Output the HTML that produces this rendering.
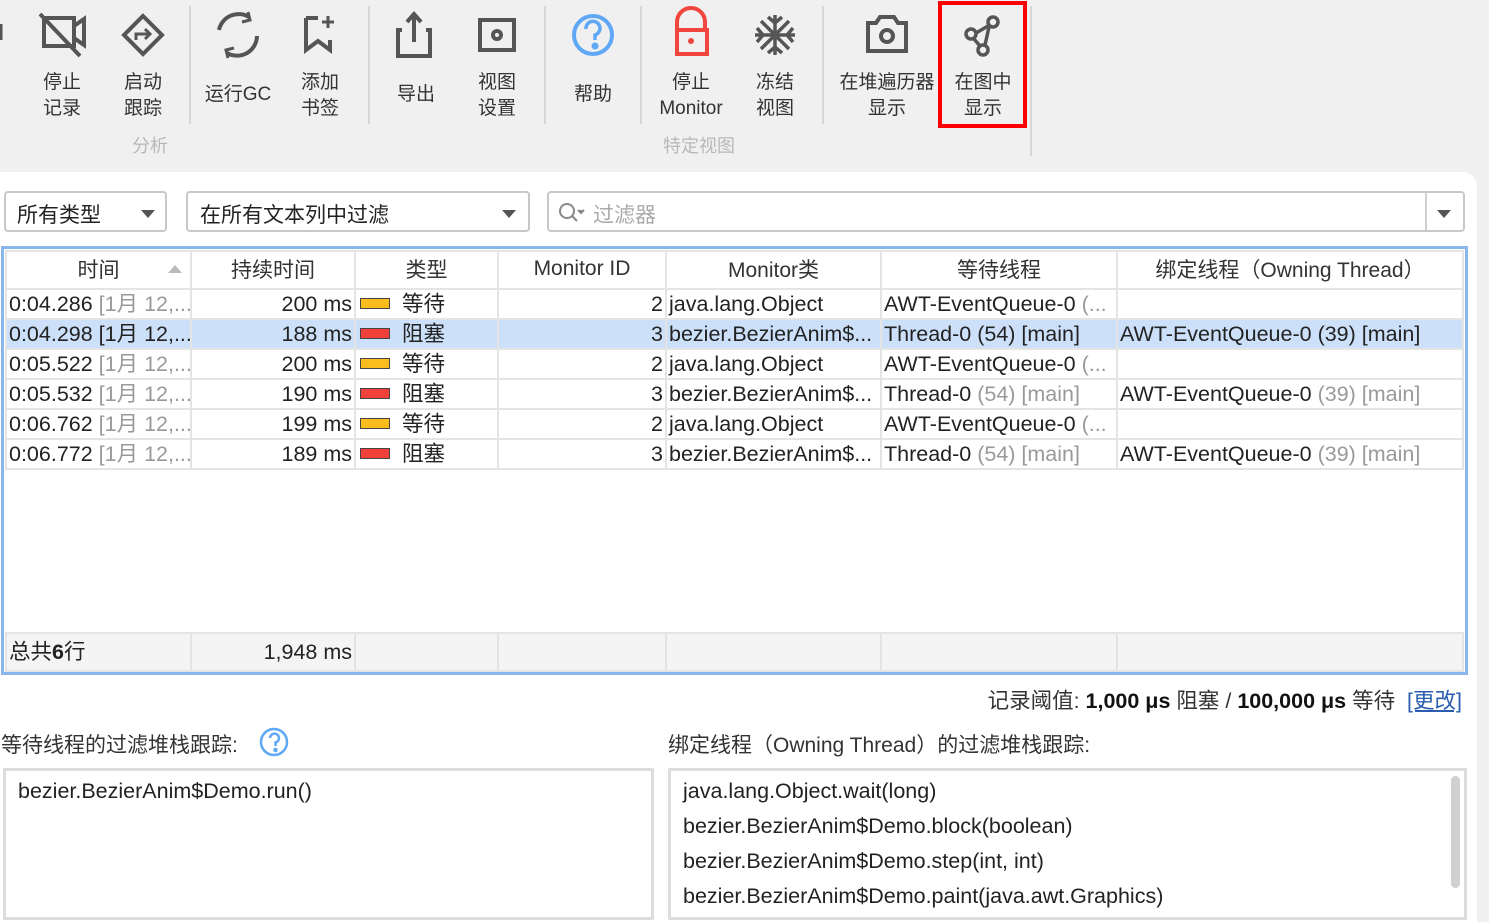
<!DOCTYPE html>
<html><head><meta charset="utf-8"><style>
*{box-sizing:border-box;margin:0;padding:0}
body{width:1489px;height:922px;overflow:hidden;background:#f0f0f0;font-family:"Liberation Sans","Noto Sans CJK SC",sans-serif;color:#222;position:relative}
.a{position:absolute}
.tb{text-align:center;font-size:19px;color:#333;line-height:26px;white-space:nowrap}
.sep{position:absolute;top:6px;width:2px;height:118px;background:#d6d6d6}
.grp{position:absolute;top:132px;font-size:18px;color:#b8b8b8}
.panel{position:absolute;left:0;top:172px;width:1477px;height:750px;background:#fff;border-top-right-radius:14px}
.box{position:absolute;border:2px solid #c8c8c8;border-radius:4px;background:#fff;font-size:21px}
table{border-collapse:collapse;table-layout:fixed;font-size:21.5px}
td{border:2px solid #e4e4e4;height:30px;padding:0 2px;white-space:nowrap;overflow:hidden;line-height:26px}
th{border:2px solid #e4e4e4;height:38px;font-weight:normal;font-size:21px;color:#333;padding-bottom:3px}
.r{text-align:right}
.g{color:#999}
.sel td{background:#cce0fa}
.sw{display:inline-block;width:30px;height:11px;border:1px solid #444;vertical-align:middle;margin:0 12px 3px 2px}
.y{background:#fbbc1e}.rd{background:#f2403a}
</style></head><body>
<svg class="a" style="left:0;top:0" width="1040" height="70" fill="none" stroke="#555" stroke-width="4">
<path d="M0 24v16" stroke-width="5"/>
<path d="M44 18h30v28h-30z M74 26l10-7v26l-10-7" /><path d="M40 14l40 42" stroke-width="4"/>
<path d="M143 16l19 19-19 19-19-19z"/><path d="M136 40v-6h12" stroke-width="3"/><path d="M145 29l5 5-5 5" stroke-width="3"/>
<path d="M219 30a20 20 0 0 1 30-13 M257 36a20 20 0 0 1-30 17" /><path d="M248 12l2 8-8 2 M228 58l-2-8 8-2" stroke-width="3"/>
<path d="M306 18v32l12-9 12 9v-10 M306 18h12" /><path d="M328 16v12 M322 22h12" stroke-width="3"/>
<path d="M402 30h-4v26h32v-26h-4 M414 16v26 M407 22l7-8 7 8"/>
<path d="M480 20h34v30h-34z"/><circle cx="497" cy="35" r="4" stroke-width="4"/>
<circle cx="593" cy="35" r="19" stroke="#5fa8f5"/>
<path d="M586 29a7 7 0 1 1 9 6v5" stroke="#5fa8f5" stroke-width="3.5"/><circle cx="595" cy="46" r="1.5" fill="#5fa8f5" stroke="#5fa8f5"/>
<path d="M677 30v-8a14 14 0 0 1 28 0v8" stroke="#f0463d"/><rect x="677" y="30" width="30" height="24" stroke="#f0463d"/><circle cx="691" cy="41" r="3" fill="#f0463d" stroke="none"/>
<path d="M775 15v40 M755 35h40 M761 21l28 28 M789 21l-28 28 M768 17l7 6 7-6 M768 53l7-6 7 6 M757 28l6 7-6 7 M793 28l-6 7 6 7" stroke-width="3.5"/>
<path d="M868 23h8l4-6h14l4 6h8v28h-38z"/><circle cx="887" cy="36" r="6"/>
<circle cx="993" cy="22" r="5" stroke-width="3.5"/><circle cx="971" cy="34" r="5" stroke-width="3.5"/><circle cx="983" cy="50" r="5" stroke-width="3.5"/><path d="M976 33l12-7 M974 39l6 7 M989 27l-4 18" stroke-width="3.5"/>
</svg>
<div class="a tb" style="left:32px;top:70px;width:60px">停止<br>记录</div>
<div class="a tb" style="left:113px;top:70px;width:60px">启动<br>跟踪</div>
<div class="a tb" style="left:198px;top:82px;width:80px">运行GC</div>
<div class="a tb" style="left:290px;top:70px;width:60px">添加<br>书签</div>
<div class="a tb" style="left:386px;top:82px;width:60px">导出</div>
<div class="a tb" style="left:467px;top:70px;width:60px">视图<br>设置</div>
<div class="a tb" style="left:563px;top:82px;width:60px">帮助</div>
<div class="a tb" style="left:651px;top:70px;width:80px">停止<br>Monitor</div>
<div class="a tb" style="left:745px;top:70px;width:60px">冻结<br>视图</div>
<div class="a tb" style="left:837px;top:70px;width:100px">在堆遍历器<br>显示</div>
<div class="a tb" style="left:943px;top:70px;width:80px">在图中<br>显示</div>
<div class="sep" style="left:189px"></div><div class="sep" style="left:368px"></div><div class="sep" style="left:544px"></div><div class="sep" style="left:640px"></div><div class="sep" style="left:822px"></div><div class="sep" style="left:1030px;height:150px"></div>
<div class="grp" style="left:132px">分析</div><div class="grp" style="left:663px">特定视图</div>
<div class="a" style="left:938px;top:1px;width:89px;height:127px;border:4px solid #f00"></div>

<div class="panel"></div>
<div class="box" style="left:4px;top:191px;width:163px;height:41px;padding:6px 11px">所有类型<span class="a" style="right:10px;top:17px;border:7px solid transparent;border-top:8px solid #555;border-bottom:0"></span></div>
<div class="box" style="left:186px;top:191px;width:344px;height:41px;padding:6px 12px">在所有文本列中过滤<span class="a" style="right:12px;top:17px;border:7px solid transparent;border-top:8px solid #555;border-bottom:0"></span></div>
<div class="box" style="left:547px;top:191px;width:918px;height:41px;padding:6px 44px;color:#aaa">过滤器
<svg class="a" style="left:9px;top:9px" width="28" height="22" fill="none" stroke="#888" stroke-width="2"><circle cx="9" cy="9" r="7"/><path d="M14 14l5 5"/><path d="M20 8l3 3 3-3" fill="#888"/></svg>
<span class="a" style="left:876px;top:0;width:2px;height:37px;background:#d0d0d0"></span>
<span class="a" style="right:12px;top:17px;border:7px solid transparent;border-top:8px solid #555;border-bottom:0"></span></div>

<div class="a" style="left:1px;top:246px;width:1467px;height:429px;border:3px solid #8ab6ee;background:#fff"></div>
<table class="a" style="left:5px;top:250px;width:1457px">
<colgroup><col style="width:185px"><col style="width:164px"><col style="width:143px"><col style="width:168px"><col style="width:215px"><col style="width:236px"><col style="width:346px"></colgroup>
<tr><th style="position:relative">时间<span class="a" style="right:8px;top:13px;border:7px solid transparent;border-bottom:8px solid #bbb;border-top:0"></span></th><th>持续时间</th><th>类型</th><th>Monitor ID</th><th>Monitor类</th><th>等待线程</th><th>绑定线程（Owning Thread）</th></tr>
<tr><td>0:04.286 <span class="g">[1月 12,...</span></td><td class="r">200 ms</td><td><span class="sw y"></span>等待</td><td class="r">2</td><td>java.lang.Object</td><td>AWT-EventQueue-0 <span class="g">(...</span></td><td></td></tr>
<tr class="sel"><td>0:04.298 [1月 12,...</td><td class="r">188 ms</td><td><span class="sw rd"></span>阻塞</td><td class="r">3</td><td>bezier.BezierAnim$...</td><td>Thread-0 (54) [main]</td><td>AWT-EventQueue-0 (39) [main]</td></tr>
<tr><td>0:05.522 <span class="g">[1月 12,...</span></td><td class="r">200 ms</td><td><span class="sw y"></span>等待</td><td class="r">2</td><td>java.lang.Object</td><td>AWT-EventQueue-0 <span class="g">(...</span></td><td></td></tr>
<tr><td>0:05.532 <span class="g">[1月 12,...</span></td><td class="r">190 ms</td><td><span class="sw rd"></span>阻塞</td><td class="r">3</td><td>bezier.BezierAnim$...</td><td>Thread-0 <span class="g">(54) [main]</span></td><td>AWT-EventQueue-0 <span class="g">(39) [main]</span></td></tr>
<tr><td>0:06.762 <span class="g">[1月 12,...</span></td><td class="r">199 ms</td><td><span class="sw y"></span>等待</td><td class="r">2</td><td>java.lang.Object</td><td>AWT-EventQueue-0 <span class="g">(...</span></td><td></td></tr>
<tr><td>0:06.772 <span class="g">[1月 12,...</span></td><td class="r">189 ms</td><td><span class="sw rd"></span>阻塞</td><td class="r">3</td><td>bezier.BezierAnim$...</td><td>Thread-0 <span class="g">(54) [main]</span></td><td>AWT-EventQueue-0 <span class="g">(39) [main]</span></td></tr>
</table>
<table class="a" style="left:5px;top:632px;width:1457px;background:#f4f4f4">
<colgroup><col style="width:185px"><col style="width:164px"><col style="width:143px"><col style="width:168px"><col style="width:215px"><col style="width:236px"><col style="width:346px"></colgroup>
<tr><td style="height:38px">总共<b>6</b>行</td><td class="r">1,948 ms</td><td></td><td></td><td></td><td></td><td></td></tr>
</table>

<div class="a" style="right:27px;top:684px;font-size:21.5px;color:#333;white-space:nowrap">记录阈值: <b style="color:#111">1,000 μs</b> 阻塞 / <b style="color:#111">100,000 μs</b> 等待 &nbsp;<span style="color:#2a5db0;text-decoration:underline">[更改]</span></div>
<div class="a" style="left:1px;top:729px;font-size:21px;color:#333">等待线程的过滤堆栈跟踪:</div>
<svg class="a" style="left:259px;top:727px" width="32" height="32" fill="none" stroke="#5fa8f5" stroke-width="2.5"><circle cx="15" cy="15" r="13"/><path d="M11 11a4.5 4.5 0 1 1 5.5 4.5v3.5"/><circle cx="16.5" cy="23" r="1" fill="#5fa8f5"/></svg>
<div class="a" style="left:668px;top:729px;font-size:21px;color:#333">绑定线程（Owning Thread）的过滤堆栈跟踪:</div>
<div class="a" style="left:3px;top:768px;width:651px;height:152px;border:3px solid #ddd;background:#fff;font-size:21.5px;padding:8px 12px">bezier.BezierAnim$Demo.run()</div>
<div class="a" style="left:668px;top:768px;width:799px;height:152px;border:3px solid #ddd;background:#fff;font-size:21.5px;padding:6px 12px;line-height:35px">
<div style="margin-top:-3px">java.lang.Object.wait(long)<br>bezier.BezierAnim$Demo.block(boolean)<br>bezier.BezierAnim$Demo.step(int, int)<br>bezier.BezierAnim$Demo.paint(java.awt.Graphics)</div>
<span class="a" style="right:4px;top:5px;width:9px;height:112px;background:#d0d0d0;border-radius:5px"></span></div>
</body></html>
